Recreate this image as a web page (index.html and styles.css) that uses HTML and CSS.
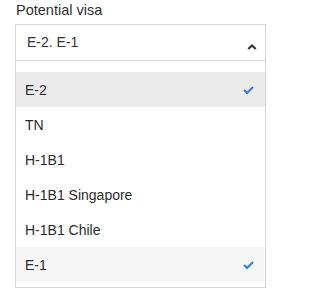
FILE: index.html
```html
<!DOCTYPE html>
<html>
<head>
<meta charset="utf-8">
<link rel="stylesheet" href="styles.css">
</head>
<body>
<div class="field">
  <div class="label">Potential visa</div>
  <div class="dropdown">
    <div class="control">
      <span class="value">E-2. E-1</span>
      <svg class="caret" width="10" height="6" viewBox="0 0 10 6"><path d="M1.2 5 L5 1.4 L8.8 5" fill="none" stroke="#333" stroke-width="2"/></svg>
    </div>
    <ul class="menu">
      <li class="option hover"><span>E-2</span><svg class="check" width="11" height="8" viewBox="0 0 11 8"><path d="M1 4 L4 7 L10 1" fill="none" stroke="#2b7de9" stroke-width="2"/></svg></li>
      <li class="option"><span>TN</span></li>
      <li class="option"><span>H-1B1</span></li>
      <li class="option"><span>H-1B1 Singapore</span></li>
      <li class="option"><span>H-1B1 Chile</span></li>
      <li class="option selected"><span>E-1</span><svg class="check" width="11" height="8" viewBox="0 0 11 8"><path d="M1 4 L4 7 L10 1" fill="none" stroke="#2b7de9" stroke-width="2"/></svg></li>
    </ul>
  </div>
</div>
</body>
</html>
```

FILE: styles.css
```css
html, body {
  margin: 0;
  padding: 0;
  background: #fff;
}
body {
  font-family: "Liberation Sans", Arial, sans-serif;
  font-size: 14px;
  color: #333;
}
.field {
  width: 251px;
  padding: 2px 0 0 15px;
}
.label {
  padding-left: 1px;
  line-height: 16px;
  font-size: 14.5px;
  color: #2e2e2e;
  margin-bottom: 6px;
}
.dropdown {
  box-sizing: border-box;
  width: 251px;
  border: 1px solid #d6d6d6;
  box-shadow: 0 1px 0 #e6e6e6;
  background: #fff;
}
.control {
  height: 35px;
  display: flex;
  align-items: center;
  justify-content: space-between;
  padding: 0 8px 0 11px;
  border-bottom: 1px solid #d6d6d6;
}
.value {
  color: #333;
  margin-top: -1px;
}
.caret {
  margin-top: 8px;
}
.menu {
  list-style: none;
  margin: 0;
  padding: 11px 0 5px;
}
.option {
  height: 35px;
  display: flex;
  align-items: center;
  justify-content: space-between;
  padding: 0 11px 0 9px;
  color: #2b2b2b;
}
.option.hover {
  background: #ebebeb;
}
.option.selected {
  background: #f7f7f7;
}
.check {
  margin-top: 1px;
}
```
